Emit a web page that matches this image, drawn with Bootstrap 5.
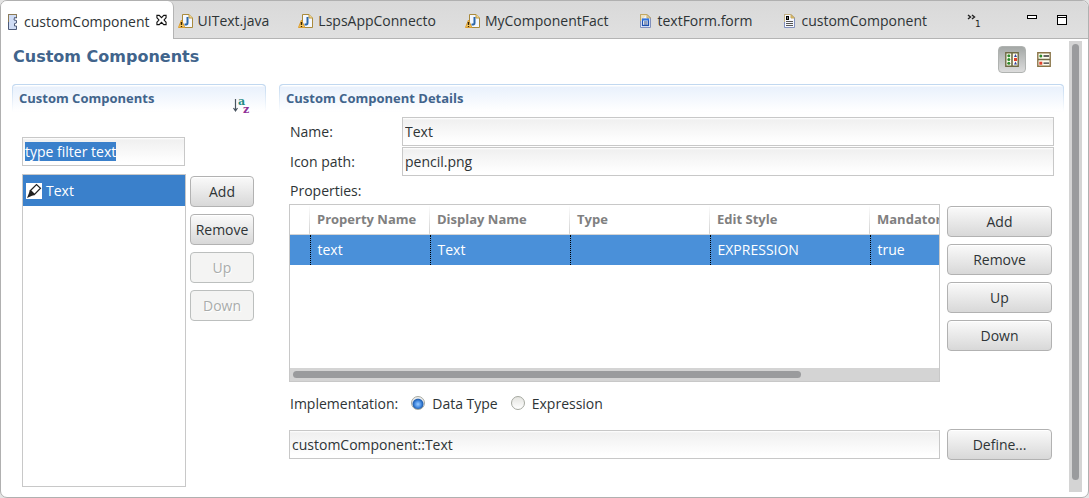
<!DOCTYPE html>
<html lang="en">
<head>
<meta charset="utf-8">
<meta name="viewport" content="width=device-width, initial-scale=1">
<title>Custom Components</title>
<link rel="stylesheet" href="https://cdn.jsdelivr.net/npm/bootstrap@5.3.0/dist/css/bootstrap.min.css">
<style>
  body { font-family: "Open Sans", "Noto Sans", sans-serif; font-size: 14px; line-height: 18px; color: #2e3436; background: #e4e4e4; }
  svg { display: block; flex: none; overflow: visible; }
  .editor { border: 1px solid #b0b0b0; border-radius: 7px; background: #fff; overflow: hidden; }
  .tabstrip { height: 38px; background: linear-gradient(#d9d9d9, #e0e0e0); border-bottom: 1px solid #b4b4b4; }
  .tabstrip .nav-item { display: flex; }
  .tabstrip .nav-link { display: flex; align-items: center; gap: 4px; padding: 3px 29px 0 0; color: #2e3436; font-size: 14px; }
  .tabstrip .nav-item.current { margin: 0 4px -1px 0; background: #fff; border-right: 1px solid #b4b4b4; border-radius: 0 6px 0 0; padding-right: 6px; }
  .tabstrip .current .nav-link { padding-left: 3px; padding-right: 6px; }
  .icon-btn { display: flex; border: 0; padding: 0; background: none; }
  .window-tools { padding: 15px 20px 0 0; }
  .form-title { font-family: "DejaVu Sans", sans-serif; font-size: 16px; line-height: 22px; color: #41648c; font-weight: 700; }
  .tool { width: 28px; height: 27px; border: 1px solid transparent; border-radius: 4px; align-items: center; justify-content: center; }
  .tool.pressed { background: linear-gradient(#a4a8a6, #dcdcdc); border-color: #b0b3b1; }
  .form-head { padding: 7px 6px 0 12px; }
  .sections { gap: 13px; padding: 11px 0 0 11px; }
  .section-head { height: 28px; padding: 0 6px; border: 1px solid transparent; border-top-color: #c1d8f0; border-radius: 4px 4px 0 0;
    background: linear-gradient(#fff, #fff 1px, #e9f1fc 2px, #fff) padding-box, linear-gradient(#c1d8f0, #fff) border-box; }
  .section-head h2 { font-size: 13px; line-height: 26px; font-weight: 700; color: #41648c; margin: 0; }
  .side { flex: 0 0 254px; }
  .side-body { padding: 25px 12px 10px 10px; gap: 8px; }
  .field { height: 29px; border: 1px solid #c8c8c8; border-radius: 0; padding: 0 2px; font-size: 14px; color: #2e3436; background: linear-gradient(#fff, #f0f0f0 2px, #fff 90%); box-shadow: none; }
  .field:focus { border-color: #c8c8c8; box-shadow: none; color: #2e3436; background: linear-gradient(#fff, #f0f0f0 2px, #fff 90%); }
  .field::selection { background: #3a80cb; color: #fff; }
  .filter { width: 163px; }
  .pane { border: 1px solid #c8c8c8; background: #fff; }
  .entry { background: #3a80cb; color: #fff; height: 31px; padding: 0 3px; gap: 4px; }
  .push { height: 31px; padding: 0; border: 1px solid #b2b2b2; border-radius: 4px; font-size: 14px; line-height: 18px; color: #2e3436; background: linear-gradient(#fafafa, #d8d8d8); box-shadow: inset 0 1px #fff; }
  .push:disabled { color: #a9acab; background: #f4f4f3; opacity: 1; border-color: #bcbfbe; box-shadow: none; text-shadow: 1px 1px #fff; }
  .push-col { gap: 7px; padding-top: 2px; }
  .narrow { flex: none; width: 64px; }
  .wide { flex: none; width: 105px; }
  .details { min-width: 0; }
  .details-body { padding: 5px 12px 0 10px; }
  .fields { display: grid; gap: 1px; margin-right: -2px; }
  .caption { width: 113px; padding-left: 1px; }
  .props-label { padding: 6px 1px 4px; }
  .split { gap: 7px; }
  .grid-pane { height: 178px; min-width: 0; }
  .props { table-layout: fixed; width: 719px; margin: 0; }
  .props th, .props td { padding: 0 7px; white-space: nowrap; }
  .props th { height: 29px; font-size: 13px; color: #808080; border-bottom: 1px solid #d4d4d4;
    background: linear-gradient(#fff, #d0d0d0) right / 1px 100% no-repeat; }
  .props td { height: 31px; color: #fff; background: #4a90d9; border-right: 1px dotted #000; }
  .bar { background: #d4d4d4; }
  .bar .thumb { background: #9a9b9d; border-radius: 4px; }
  .bar-h { height: 13px; padding: 3px; }
  .bar-h .thumb { height: 7px; width: 79%; }
  .bar-v { width: 13px; padding: 3px; margin: 2px 6px 5px 5px; }
  .bar-v .thumb { width: 7px; height: 98%; }
  .impl { padding: 13px 1px 16px; }
  .pick { appearance: none; width: 14px; height: 14px; margin: 0 7px 2px 13px; border: 1px solid #a5a8a0; border-radius: 50%; background: linear-gradient(#e4e4e0, #fff); }
  .pick:checked { background: radial-gradient(circle at 50% 60%, #9ccdff 0, #4a90e6 3px, #2160b0 5px, #eee 6px); }
</style>
</head>
<body>
<svg width="0" height="0" class="position-absolute" aria-hidden="true">
  <symbol id="java" viewBox="0 0 16 16">
    <path d="M4.500 1.500H11L14.500 5V14.500H4.500Z" fill="#f4f8ff" stroke="#a98a3c"/><path d="M11 1.500V5H14.500" fill="#f3d68c" stroke="#c09a40"/>
    <path d="M9.500 4V10Q9.500 12 6.500 11.500" fill="none" stroke="#2b66a8" stroke-width="2"/>
    <path d="M3.500 7L6.800 14.500H.500Z" fill="#f6c862" stroke="#dc9d2e" stroke-linejoin="round"/><path d="M3.500 9V12M3.500 13V14" stroke="#33230a" stroke-width="1.400"/>
  </symbol>
</svg>

<main class="editor min-vh-100 d-flex flex-column">
  <div class="tabstrip d-flex justify-content-between">
    <ul class="nav flex-nowrap">
      <li class="nav-item current align-items-center">
        <a class="nav-link" href="#">
          <svg width="16" height="16"><path d="M4.500 .500H12.500V4L10.500 3.500L10 6L12.500 6.500V9L10.500 9.500V12L12.500 12V15.500H4.500Z" fill="#cfdcf5" stroke="#4d5a78"/><path d="M4.500 8V.500H12.500V3" fill="none" stroke="#8d7b55"/></svg>
          <span>customComponent</span>
        </a>
        <button class="icon-btn" aria-label="Close tab"><svg width="11" height="12" viewBox="0 0 12 12"><path d="M1 1H3.500L6 3.500L8.500 1H11V3.500L8.800 6L11 8.500V11H8.500L6 8.500L3.500 11H1V8.500L3.200 6L1 3.500Z" fill="#fff" stroke="#111" stroke-width="1.200"/></svg></button>
      </li>
      <li class="nav-item"><a class="nav-link" href="#"><svg width="16" height="16"><use href="#java"/></svg><span>UIText.java</span></a></li>
      <li class="nav-item"><a class="nav-link" href="#"><svg width="16" height="16"><use href="#java"/></svg><span>LspsAppConnecto</span></a></li>
      <li class="nav-item"><a class="nav-link" href="#"><svg width="16" height="16"><use href="#java"/></svg><span>MyComponentFact</span></a></li>
      <li class="nav-item"><a class="nav-link" href="#">
        <svg width="16" height="16"><path d="M3.500 1.500H10L13.500 5V14.500H3.500Z" fill="#eef3ff" stroke="#8190bd"/><path d="M3.500 8V1.500H10L13.500 5H10V1.500" fill="#e8cf86" fill-opacity=".5" stroke="#c4a860"/><rect x="5.500" y="6.500" width="6" height="6" fill="#fff" stroke="#1c4fb0" stroke-width="1.300"/><path d="M5 6.500H12" stroke="#2f74e0" stroke-width="2"/><path d="M7 9H10.500M7 11H10.500" stroke="#1c3f80"/></svg>
        <span>textForm.form</span></a></li>
      <li class="nav-item"><a class="nav-link" href="#">
        <svg width="16" height="16"><path d="M3.500 1.500H10L13.500 5V14.500H3.500Z" fill="#f6f8ff" stroke="#8190bd"/><path d="M10 1.500L13.500 5H10Z" fill="#e3bf62" stroke="#c4a860"/><path d="M3.500 9V1.500H10" fill="none" stroke="#c4b080"/><rect x="5.700" y="3.700" width="1.600" height="2.600" fill="#fff" stroke="#000" stroke-width="1.400"/><path d="M5 8.500H12M5 10.500H12M5 12.500H12" stroke="#555"/></svg>
        <span>customComponent</span></a></li>
    </ul>
    <div class="window-tools d-flex align-items-start">
      <button class="icon-btn me-5" aria-label="More editors"><svg width="9" height="14"><path d="M1 -1L3.500 1L1 3M5 -1L7.500 1L5 3" fill="none" stroke="#222" stroke-width="1.400"/><text x="8" y="11" font-family="DejaVu Sans" font-size="9" fill="#222">1</text></svg></button>
      <button class="icon-btn me-3" aria-label="Minimize"><svg width="12" height="12"><rect x="3.500" y="-.500" width="9" height="3" fill="#fff" stroke="#000"/></svg></button>
      <button class="icon-btn ms-1" aria-label="Maximize"><svg width="12" height="12"><rect x="1.500" y="-.500" width="9" height="9" fill="#fff" stroke="#000"/><path d="M1 1.500H11" stroke="#000"/></svg></button>
    </div>
  </div>

  <div class="d-flex flex-grow-1">
    <div class="flex-grow-1 d-flex flex-column details">
      <header class="form-head d-flex justify-content-between">
        <h1 class="form-title m-0">Custom Components</h1>
        <div class="d-flex">
          <button class="icon-btn tool pressed" aria-label="Horizontal layout"><svg width="14" height="15"><path d="M.8 .8H13.200V14.200H.8Z" fill="#fffef0" stroke="#6e6a44" stroke-width="1.400"/><path d="M7 1V14" stroke="#6e6a44" stroke-width="1.600"/><g fill="#2f8a2c"><circle cx="3.800" cy="3.800" r="1.500"/><circle cx="3.800" cy="7.500" r="1.500"/><circle cx="3.800" cy="11.200" r="1.500"/></g><path d="M9 5L10.500 2L12 5ZM9 12.500L10.500 9.500L12 12.500Z" fill="#3540a0"/><rect x="9" y="6" width="3" height="3" fill="#e0402c"/></svg></button>
          <button class="icon-btn tool ms-1" aria-label="Vertical layout"><svg width="14" height="15"><path d="M.8 .8H13.200V14.200H.8Z" fill="#fffef0" stroke="#8a7448" stroke-width="1.400"/><path d="M1 7.500H13" stroke="#6e6a44" stroke-width="1.600"/><circle cx="3.800" cy="4" r="1.500" fill="#2f8a2c"/><rect x="2.300" y="9.700" width="3" height="3" fill="#e0402c"/><path d="M6.500 4H12M6.500 11.200H12" stroke="#333" stroke-width="1.300"/></svg></button>
        </div>
      </header>

      <div class="sections d-flex flex-grow-1">
        <section class="side d-flex flex-column">
          <div class="section-head d-flex justify-content-between">
            <h2>Custom Components</h2>
            <button class="icon-btn mt-2 pt-1 me-2" aria-label="Sort alphabetically"><svg width="18" height="17"><path d="M2.500 2V13M.500 11L2.500 14L4.500 11" fill="none" stroke="#4a5560" stroke-width="1.200"/><text x="5" y="8" font-family="DejaVu Serif" font-weight="700" font-size="11" fill="#1f8a84">a</text><text x="10" y="16" font-family="DejaVu Serif" font-weight="700" font-size="11" fill="#8f2f96">z</text></svg></button>
          </div>
          <div class="side-body d-flex flex-column flex-grow-1">
            <input class="form-control field filter" id="filter" type="text" value="type filter text" aria-label="Filter" autofocus>
            <div class="d-flex flex-grow-1">
              <div class="pane flex-grow-1">
                <div class="entry d-flex align-items-center">
                  <svg width="16" height="16"><rect width="16" height="16" fill="#fff"/><path d="M4.500 7.500L10.500 1.500L14.500 5.200L8.500 11.500Z" fill="#fff" stroke="#222" stroke-width="1.200"/><path d="M3.800 7L9 12L6 12.700L1 15L3 10Z" fill="#222"/></svg>
                  <span>Text</span>
                </div>
              </div>
              <div class="d-grid align-content-start narrow ms-1 push-col">
                <button class="btn push">Add</button>
                <button class="btn push">Remove</button>
                <button class="btn push" disabled>Up</button>
                <button class="btn push" disabled>Down</button>
              </div>
            </div>
          </div>
        </section>

        <section class="details flex-grow-1">
          <div class="section-head"><h2>Custom Component Details</h2></div>
          <div class="details-body">
            <div class="fields">
              <div class="d-flex align-items-center">
                <label class="caption" for="name">Name:</label>
                <input class="form-control field flex-grow-1 w-auto" id="name" type="text" value="Text">
              </div>
              <div class="d-flex align-items-center">
                <label class="caption" for="icon">Icon path:</label>
                <input class="form-control field flex-grow-1 w-auto" id="icon" type="text" value="pencil.png">
              </div>
            </div>
            <div class="props-label">Properties:</div>
            <div class="split d-flex">
              <div class="pane grid-pane flex-grow-1 d-flex flex-column">
                <div class="flex-grow-1 overflow-hidden">
                  <table class="props">
                    <colgroup><col width="20"><col width="120"><col width="140"><col width="140"><col width="160"><col width="139"></colgroup>
                    <thead><tr><th></th><th>Property Name</th><th>Display Name</th><th>Type</th><th>Edit Style</th><th>Mandatory</th></tr></thead>
                    <tbody><tr><td></td><td>text</td><td>Text</td><td></td><td>EXPRESSION</td><td>true</td></tr></tbody>
                  </table>
                </div>
                <div class="bar bar-h"><div class="thumb"></div></div>
              </div>
              <div class="d-grid align-content-start wide push-col">
                <button class="btn push">Add</button>
                <button class="btn push">Remove</button>
                <button class="btn push">Up</button>
                <button class="btn push">Down</button>
              </div>
            </div>
            <div class="impl d-flex align-items-center">
              <span>Implementation:</span>
              <input class="pick" type="radio" name="impl" id="dt" checked><label for="dt">Data Type</label>
              <input class="pick" type="radio" name="impl" id="ex"><label for="ex">Expression</label>
            </div>
            <div class="split d-flex align-items-center">
              <input class="form-control field flex-grow-1 w-auto" type="text" value="customComponent::Text" aria-label="Data type">
              <button class="btn push wide">Define...</button>
            </div>
          </div>
        </section>
      </div>
    </div>
    <div class="bar bar-v"><div class="thumb"></div></div>
  </div>
</main>
<script src="https://cdn.jsdelivr.net/npm/bootstrap@5.3.0/dist/js/bootstrap.bundle.min.js"></script>
<script>document.getElementById('filter').select();</script>
</body>
</html>
